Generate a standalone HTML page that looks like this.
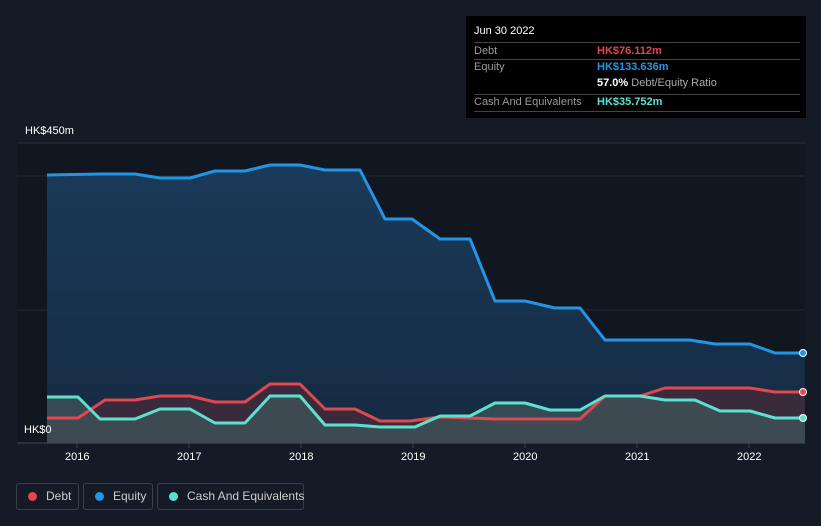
<!DOCTYPE html>
<html><head><style>
html,body{margin:0;width:821px;height:526px;overflow:hidden}
body{background:#151b26;font-family:"Liberation Sans",sans-serif;position:relative}
.tip{position:absolute;left:466px;top:16px;width:340px;height:102px;background:#000;color:#fff;font-size:11px}
.tip .r{position:absolute;left:8px;width:326px;border-top:1px solid #444}
.lbl{color:#999}
.leg{position:absolute;top:483px;height:27px;border:1px solid #3a404b;border-radius:3px;color:#ccc;font-size:12px;line-height:25px;box-sizing:border-box;white-space:nowrap}
.leg i{display:inline-block;width:9px;height:9px;border-radius:50%;margin:0 9px 0 11px;vertical-align:-1px}
.ax{position:absolute;color:#fff;font-size:11px}
</style></head><body>
<svg width="821" height="526" style="position:absolute;left:0;top:0">
<defs>
<linearGradient id="eg" x1="0" y1="0" x2="0" y2="1"><stop offset="0" stop-color="#1a3a5a"/><stop offset="1" stop-color="#152a40"/></linearGradient>
</defs>
<rect x="17" y="143" width="788" height="300" fill="#111720"/>
<line x1="17" y1="143" x2="805" y2="143" stroke="#2a303a"/>
<line x1="17" y1="176" x2="805" y2="176" stroke="#222832"/>
<line x1="17" y1="310" x2="805" y2="310" stroke="#222832"/>
<polygon fill="url(#eg)" points="47,443 47,175 100,174 135,174 160,178 190,178 215,171 245,171 270,165 300,165 325,170 360,170 385,219 412,219 440,239 470,239 495,301 525,301 555,308 580,308 605,340 660,340 690,340 715,344 750,344 775,353 805,353 805,443"/>
<polygon fill="#3d2b3c" opacity="0.9" points="47,443 47,418 78,418 105,400 135,400 160,396 190,396 215,402 245,402 270,384 300,384 325,409 355,409 380,421 410,421 440,417 470,418 495,419 580,419 605,396 640,396 665,388 750,388 775,392 805,392 805,443"/>
<polygon fill="#3f5258" opacity="0.8" points="47,443 47,397 78,397 100,419 135,419 160,409 190,409 215,423 245,423 270,396 300,396 325,425 355,425 380,427 415,427 440,416 470,416 495,403 525,403 550,410 580,410 605,396 640,396 665,400 695,400 720,411 750,411 775,418 805,418 805,443"/>
<g fill="none" stroke-width="3" stroke-linejoin="round">
<polyline stroke="#2394e6" points="47,175 100,174 135,174 160,178 190,178 215,171 245,171 270,165 300,165 325,170 360,170 385,219 412,219 440,239 470,239 495,301 525,301 555,308 580,308 605,340 660,340 690,340 715,344 750,344 775,353 805,353"/>
<polyline stroke="#e0474f" points="47,418 78,418 105,400 135,400 160,396 190,396 215,402 245,402 270,384 300,384 325,409 355,409 380,421 410,421 440,417 470,418 495,419 580,419 605,396 640,396 665,388 750,388 775,392 805,392"/>
<polyline stroke="#5ee0cf" points="47,397 78,397 100,419 135,419 160,409 190,409 215,423 245,423 270,396 300,396 325,425 355,425 380,427 415,427 440,416 470,416 495,403 525,403 550,410 580,410 605,396 640,396 665,400 695,400 720,411 750,411 775,418 805,418"/>
</g>
<line x1="17" y1="443" x2="805" y2="443" stroke="#444a55"/>
<g stroke="#444a55"><line x1="77" y1="443" x2="77" y2="448"/><line x1="189" y1="443" x2="189" y2="448"/><line x1="301" y1="443" x2="301" y2="448"/><line x1="413" y1="443" x2="413" y2="448"/><line x1="525" y1="443" x2="525" y2="448"/><line x1="637" y1="443" x2="637" y2="448"/><line x1="749" y1="443" x2="749" y2="448"/></g>
<circle cx="803" cy="353" r="3.5" fill="#2394e6" stroke="#fff" stroke-width="1"/>
<circle cx="803" cy="392" r="3.5" fill="#e0474f" stroke="#fff" stroke-width="1"/>
<circle cx="803" cy="418" r="3.5" fill="#5ee0cf" stroke="#fff" stroke-width="1"/>
</svg>
<div class="ax" style="left:25px;top:125px">HK$450m</div>
<div class="ax" style="left:24px;top:424px">HK$0</div>
<div class="ax" style="left:65px;top:451px">2016</div>
<div class="ax" style="left:177px;top:451px">2017</div>
<div class="ax" style="left:289px;top:451px">2018</div>
<div class="ax" style="left:401px;top:451px">2019</div>
<div class="ax" style="left:513px;top:451px">2020</div>
<div class="ax" style="left:625px;top:451px">2021</div>
<div class="ax" style="left:737px;top:451px">2022</div>
<div class="tip">
<div style="position:absolute;left:8px;top:9px">Jun 30 2022</div>
<div class="r" style="top:26px;height:17px"><span class="lbl" style="position:absolute;top:2px">Debt</span><b style="position:absolute;left:123px;top:2px;color:#e0474f">HK$76.112m</b></div>
<div class="r" style="top:43px;height:17px;border-top:1px solid #444"><span class="lbl" style="position:absolute;top:1px">Equity</span><b style="position:absolute;left:123px;top:1px;color:#2394e6">HK$133.636m</b></div>
<div style="position:absolute;left:131px;top:61px"><b>57.0%</b> <span style="color:#aaa">Debt/Equity Ratio</span></div>
<div class="r" style="top:78px;height:16px;border-bottom:1px solid #444"><span class="lbl" style="position:absolute;top:1px">Cash And Equivalents</span><b style="position:absolute;left:123px;top:1px;color:#5ee0cf">HK$35.752m</b></div>
</div>
<div class="leg" style="left:16px;width:63px"><i style="background:#e0474f"></i>Debt</div>
<div class="leg" style="left:83px;width:70px"><i style="background:#2394e6"></i>Equity</div>
<div class="leg" style="left:157px;width:147px"><i style="background:#5ee0cf"></i>Cash And Equivalents</div>
</body></html>
